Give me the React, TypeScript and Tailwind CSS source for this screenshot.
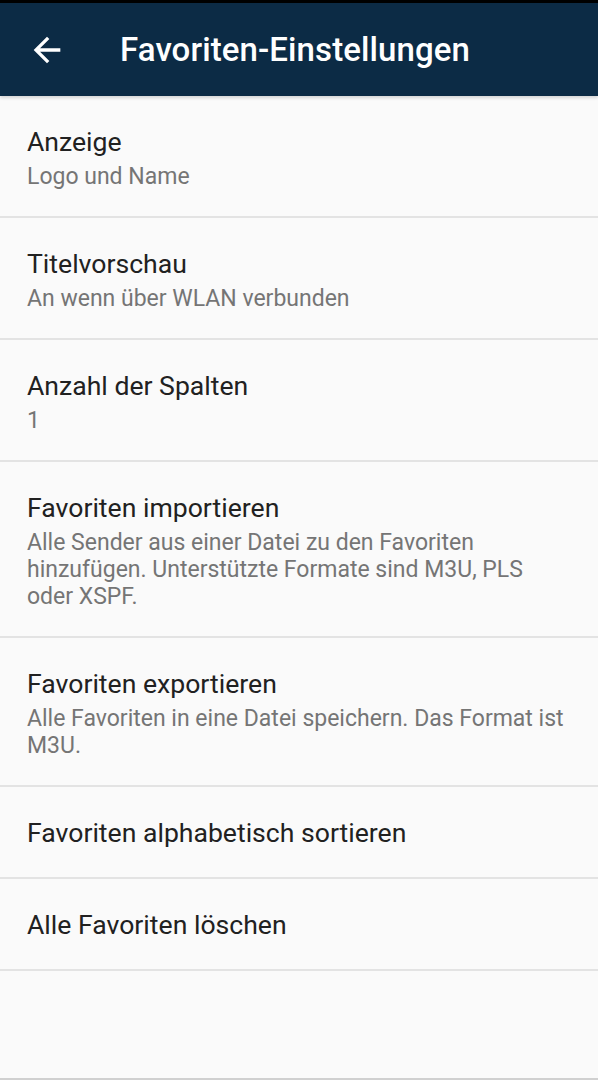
import React from "react";

const items: { title: string; sub?: string }[] = [
  { title: "Anzeige", sub: "Logo und Name" },
  { title: "Titelvorschau", sub: "An wenn über WLAN verbunden" },
  { title: "Anzahl der Spalten", sub: "1" },
  {
    title: "Favoriten importieren",
    sub: "Alle Sender aus einer Datei zu den Favoriten hinzufügen. Unterstützte Formate sind M3U, PLS oder XSPF.",
  },
  {
    title: "Favoriten exportieren",
    sub: "Alle Favoriten in eine Datei speichern. Das Format ist M3U.",
  },
  { title: "Favoriten alphabetisch sortieren" },
  { title: "Alle Favoriten löschen" },
];

export default function App() {
  return (
    <div
      className="w-[598px] h-[1080px] bg-[#fafafa] flex flex-col overflow-hidden"
      style={{ fontFamily: "Roboto, 'Liberation Sans', sans-serif" }}
    >
      <div className="h-[3px] bg-black shrink-0" />
      <div className="h-[93px] bg-[#0c2b45] flex items-center shrink-0 relative shadow-[0_2px_3px_rgba(0,0,0,0.15)]">
        <div className="w-[40px] h-[40px] ml-[27px] flex items-center justify-center">
          <svg viewBox="0 0 24 24" width="40" height="40" fill="#ffffff">
            <path d="M20 11H7.83l5.59-5.59L12 4l-8 8 8 8 1.41-1.41L7.83 13H20v-2z" />
          </svg>
        </div>
        <div className="ml-[53px] text-white text-[33px] font-medium leading-none tracking-[0.1px]">
          Favoriten-Einstellungen
        </div>
      </div>
      <div className="flex flex-col">
        {items.map((it) =>
          it.sub ? (
            <div
              key={it.title}
              className="border-b-2 border-[#e3e3e3] px-[27px] pt-[30px] pb-[26px] flex flex-col"
            >
              <div className="text-[26.6px] leading-[32px] text-[#212121]">{it.title}</div>
              <div className="mt-[5px] text-[23px] leading-[27px] text-[#757575]">{it.sub}</div>
            </div>
          ) : (
            <div
              key={it.title}
              className="h-[92px] border-b-2 border-[#e3e3e3] px-[27px] flex flex-col justify-center"
            >
              <div className="text-[26.6px] leading-[32px] text-[#212121] pt-[2px]">{it.title}</div>
            </div>
          )
        )}
      </div>
      <div className="flex-1" />
      <div className="h-[2px] bg-[#d0d0d0] shrink-0" />
    </div>
  );
}
